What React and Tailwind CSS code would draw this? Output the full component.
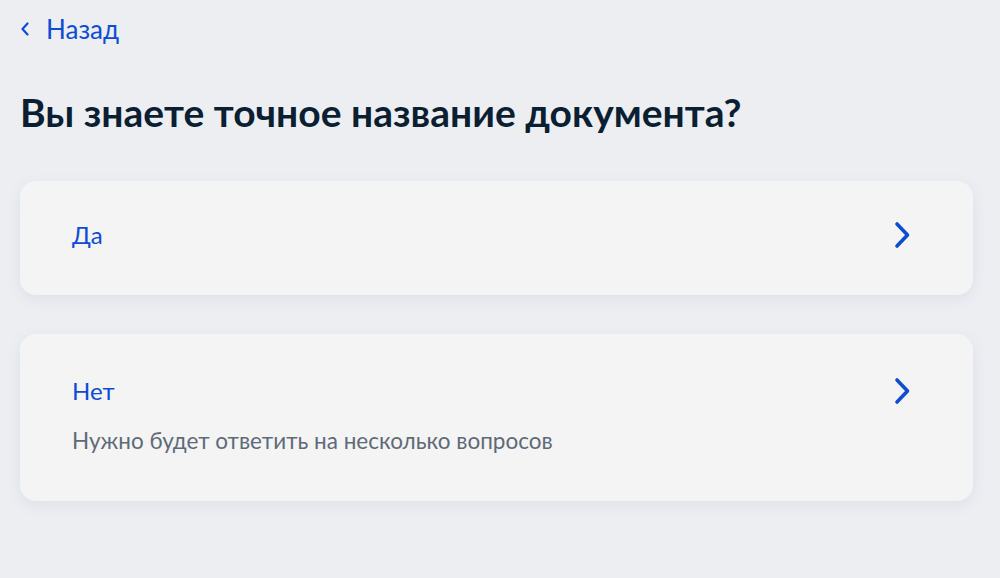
const Chevron = () => (
  <svg width="16" height="28" viewBox="0 0 16 28" fill="none" className="shrink-0">
    <path
      d="M3 3L13.5 14L3 25"
      stroke="#0d4cd3"
      strokeWidth="3.6"
      strokeLinecap="round"
      strokeLinejoin="round"
    />
  </svg>
);

const BackChevron = () => (
  <svg width="10" height="14" viewBox="0 0 10 14" fill="none" className="shrink-0">
    <path
      d="M7.5 1.5L2.5 7L7.5 12.5"
      stroke="#0d4cd3"
      strokeWidth="2.2"
      strokeLinecap="round"
      strokeLinejoin="round"
    />
  </svg>
);

const Option = ({ title, hint, className }) => (
  <button
    type="button"
    className={`w-full text-left flex justify-between bg-[#f4f4f5] rounded-2xl shadow-[0_4px_14px_rgba(100,110,140,0.10)] pl-[52px] pr-[63px] ${className}`}
  >
    <div className="flex flex-col">
      <span className="text-[24px] leading-[30px] text-[#0d4cd3]">{title}</span>
      {hint && (
        <span className="mt-[21px] text-[22.5px] leading-[28px] text-[#5f6a77]">
          {hint}
        </span>
      )}
    </div>
    <div className="h-[30px] flex items-center">
      <Chevron />
    </div>
  </button>
);

export default function App() {
  return (
    <div
      className="min-h-[578px] bg-[#eceef2] pl-5 pr-[27px] pt-[13px]"
      style={{ fontFamily: "Lato, 'Noto Sans', sans-serif" }}
    >
      <a href="#" className="flex items-center gap-[16px] text-[#0d4cd3] w-fit">
        <BackChevron />
        <span className="text-[26px] leading-[32px]">Назад</span>
      </a>

      <h1 className="mt-[43px] text-[39px] leading-[48px] font-bold text-[#0b1f33]">
        Вы знаете точное название документа?
      </h1>

      <div className="mt-[45px] flex flex-col gap-[39px]">
        <Option title="Да" className="pt-[39px] pb-[45px]" />
        <Option
          title="Нет"
          hint="Нужно будет ответить на несколько вопросов"
          className="pt-[42px] pb-[46px]"
        />
      </div>
    </div>
  );
}
